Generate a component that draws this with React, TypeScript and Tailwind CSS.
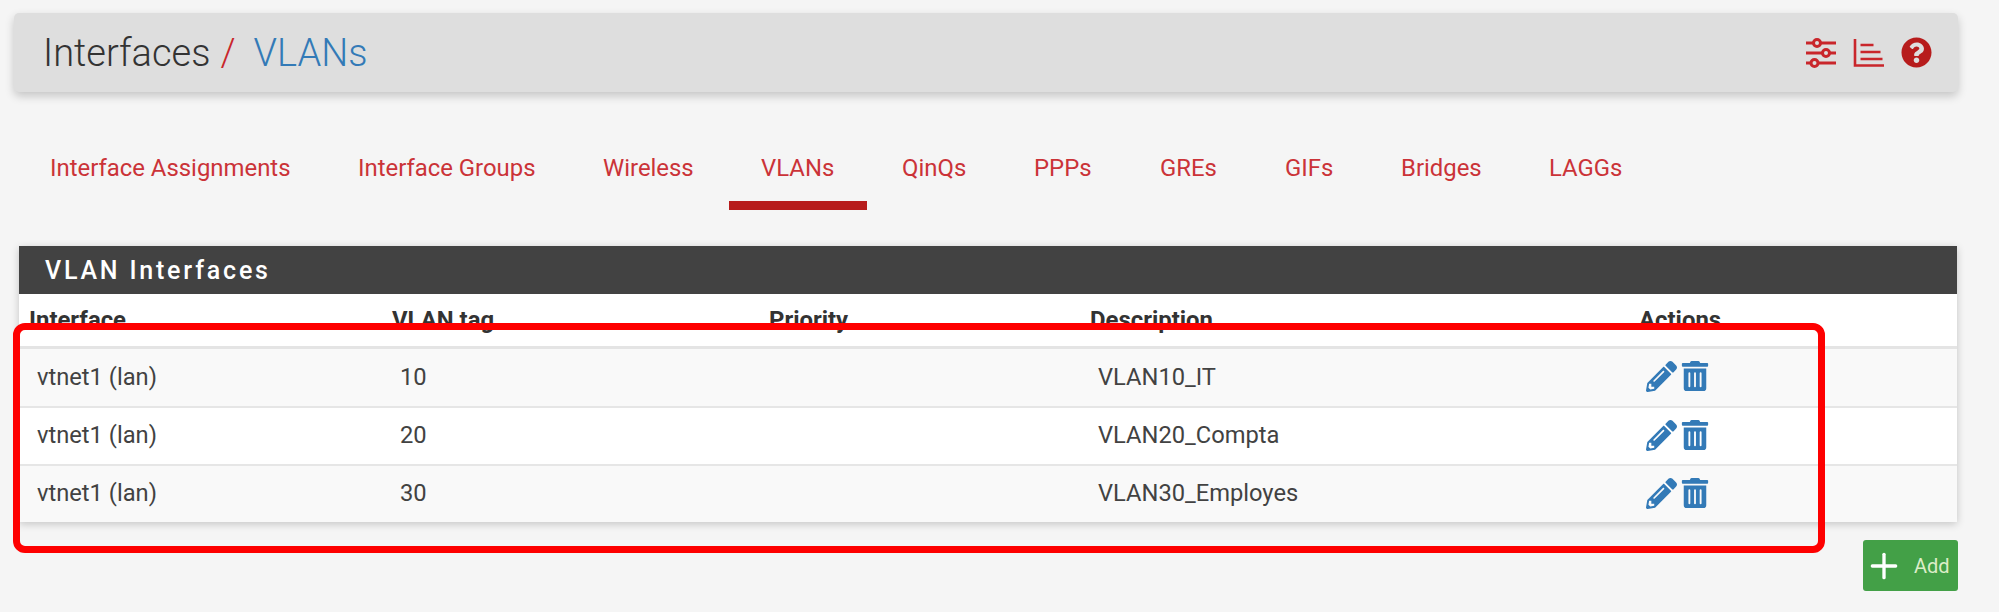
import React from 'react';
import { FaPencilAlt, FaTrashAlt, FaQuestionCircle } from 'react-icons/fa';
import { Plus } from 'lucide-react';

const tabs = [
  { label: 'Interface Assignments', className: 'w-[308px]' },
  { label: 'Interface Groups', className: 'w-[245px]' },
  { label: 'Wireless', className: 'w-[158px]' },
  { label: 'VLANs', className: 'w-[138px] mr-[3px]', active: true },
  { label: 'QinQs', className: 'w-[132px]' },
  { label: 'PPPs', className: 'w-[126px]' },
  { label: 'GREs', className: 'w-[125px]' },
  { label: 'GIFs', className: 'w-[116px]' },
  { label: 'Bridges', className: 'w-[148px]' },
  { label: 'LAGGs', className: 'w-[130px]' },
];

const rows = [
  { iface: 'vtnet1 (lan)', tag: '10', desc: 'VLAN10_IT', bg: 'bg-[#f9f9f9]', h: 'h-[57px]' },
  { iface: 'vtnet1 (lan)', tag: '20', desc: 'VLAN20_Compta', bg: 'bg-white', h: 'h-[58px]' },
  { iface: 'vtnet1 (lan)', tag: '30', desc: 'VLAN30_Employes', bg: 'bg-[#f9f9f9]', h: 'h-[58px]' },
];

const gridCols = 'grid grid-cols-[363px_377px_321px_549px_1fr]';

const SlidersIcon = () => (
  <svg width="32" height="30" viewBox="0 0 32 30" className="text-[#c9262b]">
    <g stroke="currentColor" strokeWidth="3" fill="none">
      <path d="M1 5h30M1 15h30M1 25h30" />
      <circle cx="12" cy="5" r="3.5" fill="#dedede" />
      <circle cx="21" cy="15" r="3.5" fill="#dedede" />
      <circle cx="9.5" cy="25" r="3.5" fill="#dedede" />
    </g>
  </svg>
);

const ChartIcon = () => (
  <svg width="32" height="30" viewBox="0 0 32 30" className="text-[#c9262b]">
    <g stroke="currentColor" strokeWidth="2.6" fill="none">
      <path d="M2 1v26.5h29" />
      <path d="M7.5 7h13M7.5 14h20M7.5 21h22" />
    </g>
  </svg>
);

export default function App() {
  return (
    <div className="relative w-[1999px] h-[612px] overflow-hidden bg-[#f5f5f5] font-['Roboto',sans-serif]">
      <div className="pt-[13px] pl-[14px]">
        {/* page title bar */}
        <div className="flex h-[79px] w-[1944px] items-center justify-between rounded-[5px] bg-[#dedede] pl-[29px] pr-[26px] shadow-[0_4px_10px_rgba(0,0,0,0.2)]">
          <div className="flex items-center text-[38px] font-light leading-none">
            <span className="text-[#333]">Interfaces</span>
            <span className="ml-[10px] text-[#c9262b]">/</span>
            <span className="ml-[18px] text-[#337ab7]">VLANs</span>
          </div>
          <div className="flex items-center gap-[16px]">
            <SlidersIcon />
            <ChartIcon />
            <FaQuestionCircle className="text-[#b71c1c]" size={31} />
          </div>
        </div>

        {/* tabs */}
        <div className="flex h-[94px] mt-[24px] -ml-[14px] pl-[18px]">
          {tabs.map(tab => (
            <div key={tab.label} className={`${tab.className} flex h-full flex-col`}>
              <div className="flex-1 whitespace-nowrap pl-[32px] pt-[37px] text-[23.9px] leading-[30px] text-[#cb3338]">
                {tab.label}
              </div>
              {tab.active && <div className="h-[9px] bg-[#b71c1c]" />}
            </div>
          ))}
        </div>
      </div>

      {/* panel */}
      <div className="ml-[19px] mt-[36px] w-[1938px] bg-white shadow-[0_2px_8px_rgba(0,0,0,0.2)]">
        <div className="flex h-[48px] items-center bg-[#424242] pl-[26px] pt-[1px] text-[25px] font-medium tracking-[2.8px] text-white">
          VLAN Interfaces
        </div>
        <div className={`${gridCols} h-[55px] border-b-[3px] border-[#e4e4e4] pt-[11px] text-[23.9px] font-bold leading-[30px] text-[#333]`}>
          <div className="pl-[10px]">Interface</div>
          <div className="pl-[10px]">VLAN tag</div>
          <div className="pl-[10px]">Priority</div>
          <div className="pl-[10px]">Description</div>
          <div className="pl-[10px]">Actions</div>
        </div>
        {rows.map((row, i) => (
          <div
            key={row.tag}
            className={`${gridCols} ${row.h} ${row.bg} ${i > 0 ? 'border-t-2 border-[#e6e6e6]' : ''} items-center text-[23.7px] text-[#424242]`}
          >
            <div className="pl-[18px]">{row.iface}</div>
            <div className="pl-[18px]">{row.tag}</div>
            <div />
            <div className="pl-[18px]">{row.desc}</div>
            <div className="-mt-[2px] flex items-center gap-[3px] pl-[17px] text-[#337ab7]">
              <FaPencilAlt size={31} />
              <FaTrashAlt size={30} className="-mt-[1px]" />
            </div>
          </div>
        ))}
      </div>

      <div className="mt-[18px] mr-[41px] flex justify-end">
        <button className="flex h-[51px] w-[95px] items-center rounded-[3px] bg-[#43a047] pl-[1px] text-[20px] text-[#dcedc8]">
          <Plus size={40} strokeWidth={2} className="text-white" />
          <span className="ml-[10px]">Add</span>
        </button>
      </div>

      {/* red annotation drawn over the screenshot */}
      <div className="absolute left-[13px] top-[323px] h-[230px] w-[1812px] rounded-[12px] border-[7px] border-[#fe0000]" />
    </div>
  );
}
